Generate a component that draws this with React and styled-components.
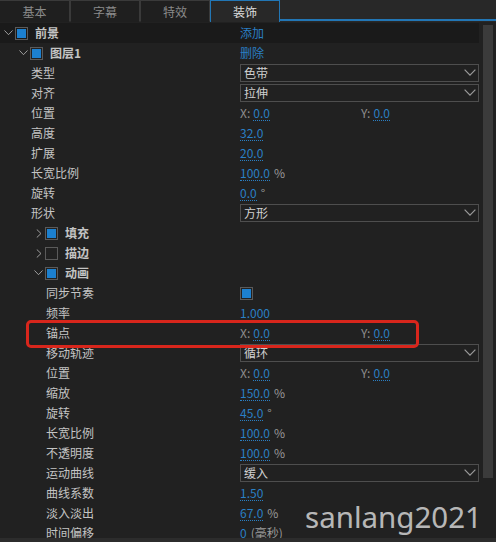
import React from "react";
import styled, { createGlobalStyle } from "styled-components";

const GlobalStyle = createGlobalStyle`
  html, body {
    margin: 0;
    padding: 0;
    background: #212121;
  }
  body {
    font-family: "Noto Sans CJK SC", "Noto Sans", sans-serif;
    font-size: 12px;
    color: #c4c4c4;
  }
`;

const Panel = styled.div`
  position: relative;
  width: 496px;
  height: 542px;
  overflow: hidden;
  background: #212121;
  display: flex;
  flex-direction: column;
`;

const TabBar = styled.div`
  display: flex;
  height: 22px;
  background: #282828;
  flex-shrink: 0;
`;

const Tab = styled.div`
  width: 70px;
  box-sizing: border-box;
  display: flex;
  align-items: center;
  justify-content: center;
  font-size: 12px;
  color: ${(p) => (p.$active ? "#dcdcdc" : "#8a8a8a")};
  background: ${(p) => (p.$active ? "#282828" : "#1f1f1f")};
  border: 1px solid ${(p) => (p.$active ? "#2276b5" : "#3a3a3a")};
  border-bottom: ${(p) => (p.$active ? "none" : "1px solid #1f1f1f")};
  border-left-width: ${(p) => (p.$first ? "0" : "1px")};
`;

const TabFill = styled.div`
  flex: 1;
  border-bottom: 2px solid #2276b5;
  margin-bottom: 1px;
`;

const Body = styled.div`
  flex: 1;
  display: flex;
  min-height: 0;
  overflow: hidden;
  padding-top: 1px;
`;

const List = styled.div`
  width: 479px;
  display: flex;
  flex-direction: column;
`;

const Scroll = styled.div`
  width: 17px;
  display: flex;
  justify-content: center;
  padding-top: 2px;
`;

const Thumb = styled.div`
  width: 10px;
  height: 453px;
  background: #3b3b3b;
`;

const Row = styled.div`
  display: grid;
  grid-template-columns: 240px 1fr;
  height: 20px;
  flex-shrink: 0;
  align-items: center;
  background: ${(p) => (p.$dark ? "#1a1a1a" : "transparent")};
`;

const NameCell = styled.div`
  display: flex;
  align-items: center;
  padding-left: ${(p) => p.$indent}px;
  white-space: nowrap;
`;

const Label = styled.span`
  color: #c4c4c4;
  font-weight: ${(p) => (p.$bold ? 700 : 400)};
  line-height: 20px;
`;

const Chevron = styled.span`
  width: 13px;
  display: flex;
  align-items: center;
  justify-content: center;
`;

const Check = styled.span`
  width: 13px;
  height: 13px;
  box-sizing: border-box;
  border: 1px solid #5a5a5a;
  display: flex;
  align-items: center;
  justify-content: center;
  margin-right: 7px;
  &::after {
    content: "";
    width: 9px;
    height: 9px;
    background: ${(p) => (p.$on ? "#1c80cf" : "transparent")};
  }
`;

const ValueCell = styled.div`
  display: flex;
  align-items: center;
  white-space: nowrap;
  line-height: 20px;
`;

const Link = styled.span`
  color: #2a7fc4;
`;

const Num = styled.span`
  color: #2a7fc4;
  border-bottom: 1px dotted #2a7fc4;
  line-height: 14px;
`;

const Unit = styled.span`
  color: #9a9a9a;
  margin-left: 4px;
`;

const Axis = styled.span`
  display: flex;
  align-items: center;
  width: ${(p) => p.$w || "auto"};
`;

const AxisLabel = styled.span`
  color: #8e8e8e;
  margin-right: 3px;
`;

const Select = styled.div`
  width: 239px;
  height: 18px;
  box-sizing: border-box;
  border: 1px solid #4e4e4e;
  display: flex;
  align-items: center;
  justify-content: space-between;
  padding: 0 2px 0 3px;
  color: #d0d0d0;
`;

const Highlight = styled.div`
  position: absolute;
  left: 26px;
  top: 320px;
  width: 393px;
  height: 28px;
  box-sizing: border-box;
  border: 3px solid #d8261c;
  border-radius: 5px;
  pointer-events: none;
`;

const Watermark = styled.div`
  position: absolute;
  left: 305px;
  top: 496px;
  font-family: "Noto Sans", sans-serif;
  font-size: 29.5px;
  color: rgba(225, 225, 225, 0.8);
`;

const Footer = styled.div`
  height: 4px;
  background: #2c2c2c;
  flex-shrink: 0;
`;

const Down = ({ size = 9, color = "#aaaaaa" }) => (
  <svg width={size} height={size * 0.6} viewBox="0 0 10 6">
    <path d="M0.5 0.5 L5 5.2 L9.5 0.5" fill="none" stroke={color} strokeWidth="1" />
  </svg>
);

const Right = () => (
  <svg width="6" height="9" viewBox="0 0 6 10">
    <path d="M0.5 0.5 L5.2 5 L0.5 9.5" fill="none" stroke="#aaaaaa" strokeWidth="1" />
  </svg>
);

const Group = ({ level, open, on, name, dark, children }) => (
  <Row $dark={dark}>
    <NameCell $indent={2 + level * 15}>
      <Chevron>{open ? <Down /> : <Right />}</Chevron>
      <Check $on={on} />
      <Label $bold>{name}</Label>
    </NameCell>
    <ValueCell>{children}</ValueCell>
  </Row>
);

const Prop = ({ level, name, children }) => (
  <Row>
    <NameCell $indent={31 + (level - 1) * 15}>
      <Label>{name}</Label>
    </NameCell>
    <ValueCell>{children}</ValueCell>
  </Row>
);

const Value = ({ v, unit }) => (
  <>
    <Num>{v}</Num>
    {unit && <Unit>{unit}</Unit>}
  </>
);

const XY = ({ x, y }) => (
  <>
    <Axis $w="121px">
      <AxisLabel>X:</AxisLabel>
      <Num>{x}</Num>
    </Axis>
    <Axis>
      <AxisLabel>Y:</AxisLabel>
      <Num>{y}</Num>
    </Axis>
  </>
);

const Dropdown = ({ text }) => (
  <Select>
    <span>{text}</span>
    <Down size={12} color="#9a9a9a" />
  </Select>
);

const tabs = ["基本", "字幕", "特效", "装饰"];

export default function App() {
  return (
    <>
      <GlobalStyle />
      <Panel>
        <TabBar>
          {tabs.map((t, i) => (
            <Tab key={t} $first={i === 0} $active={i === 3}>
              {t}
            </Tab>
          ))}
          <TabFill />
        </TabBar>
        <Body>
          <List>
            <Group level={0} open on name="前景" dark>
              <Link>添加</Link>
            </Group>
            <Group level={1} open on name="图层1">
              <Link>删除</Link>
            </Group>
            <Prop level={1} name="类型"><Dropdown text="色带" /></Prop>
            <Prop level={1} name="对齐"><Dropdown text="拉伸" /></Prop>
            <Prop level={1} name="位置"><XY x="0.0" y="0.0" /></Prop>
            <Prop level={1} name="高度"><Value v="32.0" /></Prop>
            <Prop level={1} name="扩展"><Value v="20.0" /></Prop>
            <Prop level={1} name="长宽比例"><Value v="100.0" unit="%" /></Prop>
            <Prop level={1} name="旋转"><Value v="0.0" unit="°" /></Prop>
            <Prop level={1} name="形状"><Dropdown text="方形" /></Prop>
            <Group level={2} on name="填充" />
            <Group level={2} name="描边" />
            <Group level={2} open on name="动画" />
            <Prop level={2} name="同步节奏"><Check $on /></Prop>
            <Prop level={2} name="频率"><Value v="1.000" /></Prop>
            <Prop level={2} name="锚点"><XY x="0.0" y="0.0" /></Prop>
            <Prop level={2} name="移动轨迹"><Dropdown text="循环" /></Prop>
            <Prop level={2} name="位置"><XY x="0.0" y="0.0" /></Prop>
            <Prop level={2} name="缩放"><Value v="150.0" unit="%" /></Prop>
            <Prop level={2} name="旋转"><Value v="45.0" unit="°" /></Prop>
            <Prop level={2} name="长宽比例"><Value v="100.0" unit="%" /></Prop>
            <Prop level={2} name="不透明度"><Value v="100.0" unit="%" /></Prop>
            <Prop level={2} name="运动曲线"><Dropdown text="缓入" /></Prop>
            <Prop level={2} name="曲线系数"><Value v="1.50" /></Prop>
            <Prop level={2} name="淡入淡出"><Value v="67.0" unit="%" /></Prop>
            <Prop level={2} name="时间偏移">
              <Link>0</Link>
              <Unit>(毫秒)</Unit>
            </Prop>
          </List>
          <Scroll>
            <Thumb />
          </Scroll>
        </Body>
        <Footer />
        <Highlight />
        <Watermark>sanlang2021</Watermark>
      </Panel>
    </>
  );
}
